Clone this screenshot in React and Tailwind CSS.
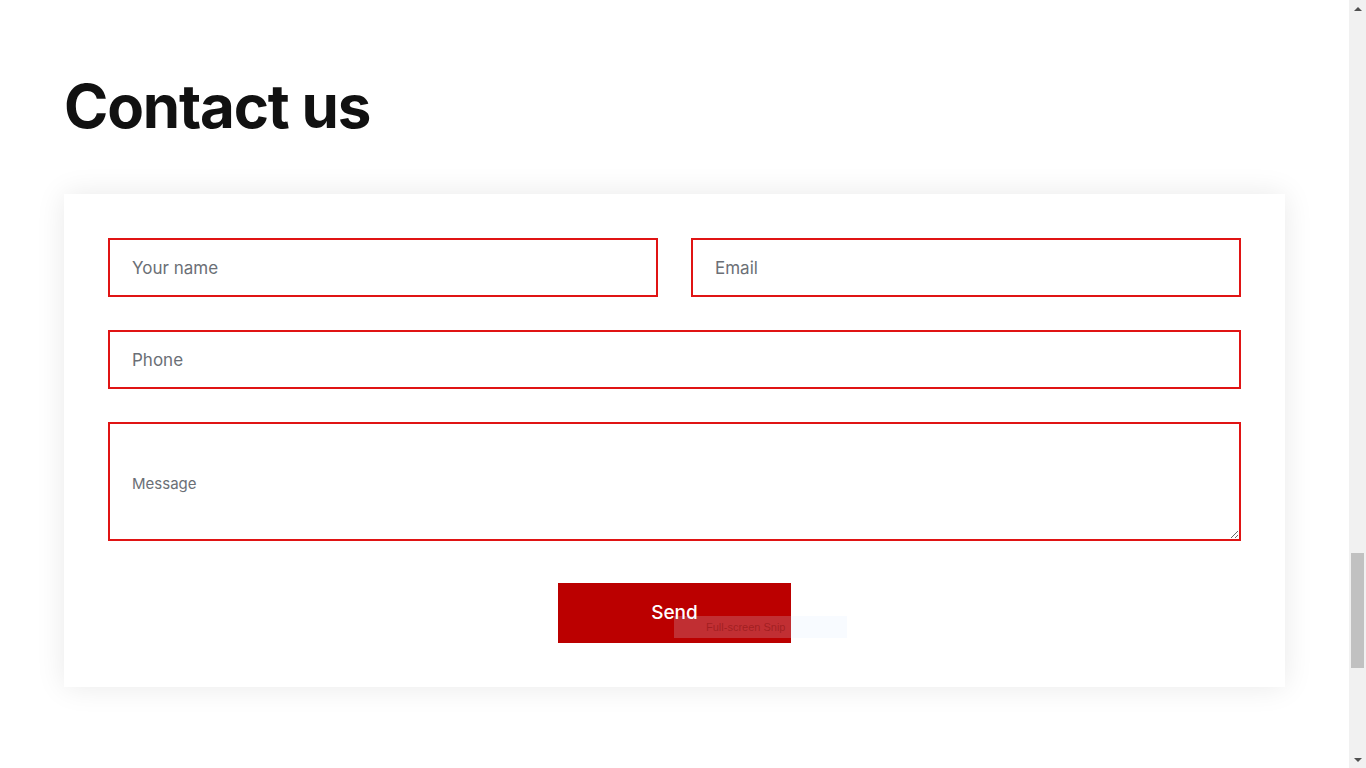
import React from 'react';

const font = { fontFamily: 'Inter, "Noto Sans", sans-serif' };

const Field = ({ placeholder, className = '' }) => (
  <input
    type="text"
    placeholder={placeholder}
    className={`h-[59px] border-2 border-[#e01414] bg-white px-[22px] text-[17px] text-gray-700 placeholder:text-[#6b6f76] outline-none ${className}`}
  />
);

const Scrollbar = () => (
  <div className="flex w-[17px] shrink-0 flex-col bg-[#f1f1f1]">
    <div className="flex h-[17px] items-center justify-center">
      <div className="h-0 w-0 border-x-[4px] border-b-[4px] border-x-transparent border-b-[#505050]" />
    </div>
    <div className="h-[536px]" />
    <div className="mx-[2px] h-[115px] bg-[#c1c1c1]" />
    <div className="flex-1" />
    <div className="flex h-[17px] items-center justify-center">
      <div className="h-0 w-0 border-x-[4px] border-t-[4px] border-x-transparent border-t-[#505050]" />
    </div>
  </div>
);

export default function App() {
  return (
    <div className="flex h-[768px] w-full overflow-hidden bg-white" style={font}>
      <div className="flex-1 px-[64px] pt-[70px]">
        <h1 className="text-[60px] font-bold leading-[72px] tracking-[-1.2px] text-[#111111]">Contact us</h1>

        <form className="mt-[52px] w-[1221px] bg-white p-[44px] shadow-[0_0_28px_rgba(0,0,0,0.09)]">
          <div className="grid grid-cols-[550px_1fr] gap-x-[33px]">
            <Field placeholder="Your name" />
            <Field placeholder="Email" />
          </div>
          <Field placeholder="Phone" className="mt-[33px] w-full" />
          <textarea
            placeholder="Message"
            className="mt-[33px] block h-[119px] w-full border-2 border-[#e01414] px-[22px] pt-[49px] text-[15px] text-gray-700 placeholder:text-[#6b6f76] outline-none"
          />
          <div className="relative mt-[42px] flex justify-center">
            <button type="button" className="h-[60px] w-[233px] bg-[#bb0000] text-[19px] font-medium text-white">
              Send
            </button>
            {/* snipping tool label caught in the screenshot */}
            <div className="absolute left-[566px] top-[33px] flex h-[22px] w-[173px] items-center bg-[#dbeaff]/20 pl-[32px] text-[11px] text-[#7a0a0a]/45" style={{ fontFamily: '"Liberation Sans", sans-serif' }}>
              Full-screen Snip
            </div>
          </div>
        </form>
      </div>
      <Scrollbar />
    </div>
  );
}
